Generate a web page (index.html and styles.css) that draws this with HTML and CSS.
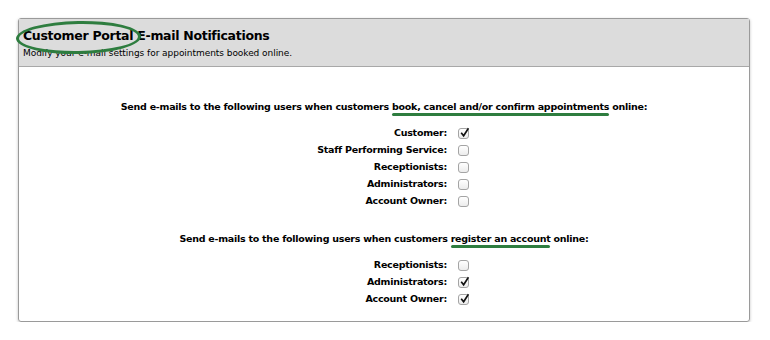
FILE: index.html
```html
<!DOCTYPE html>
<html lang="en">
<head>
  <meta charset="UTF-8">
  <title>Customer Portal E-mail Notifications</title>
  <link rel="stylesheet" href="styles.css">
</head>
<body>

  <div class="panel">
    <div class="panel-header">
      <h2>Customer Portal E-mail Notifications</h2>
      <p>Modify your e-mail settings for appointments booked online.</p>
      <span class="circle"></span>
    </div>

    <div class="panel-body">
      <p class="intro">Send e-mails to the following users when customers <span class="mark">book, cancel and/or confirm appointments</span> online:</p>
      <div class="rows">
        <label>Customer:</label><span class="box checked"><svg viewBox="0 0 10 10"><path d="M2 5.2 L4.2 8 L8.6 1.2"/></svg></span>
        <label>Staff Performing Service:</label><span class="box"></span>
        <label>Receptionists:</label><span class="box"></span>
        <label>Administrators:</label><span class="box"></span>
        <label>Account Owner:</label><span class="box"></span>
      </div>

      <p class="intro second">Send e-mails to the following users when customers <span class="mark">register an account</span> online:</p>
      <div class="rows">
        <label>Receptionists:</label><span class="box"></span>
        <label>Administrators:</label><span class="box checked"><svg viewBox="0 0 10 10"><path d="M2 5.2 L4.2 8 L8.6 1.2"/></svg></span>
        <label>Account Owner:</label><span class="box checked"><svg viewBox="0 0 10 10"><path d="M2 5.2 L4.2 8 L8.6 1.2"/></svg></span>
      </div>
    </div>
  </div>

</body>
</html>
```

FILE: styles.css
```css
body {
  margin: 0;
  padding: 18px 0 0 18px;
  background: #fff;
  font-family: "DejaVu Sans", Verdana, sans-serif;
  color: #000;
}

.panel {
  width: 730px;
  border: 1px solid #9a9a9a;
  border-radius: 3px;
  box-shadow: 0 1px 3px rgba(0, 0, 0, 0.25);
}

.panel-header {
  position: relative;
  background-color: #dcdcdc;
  border-bottom: 1px solid #a8a8a8;
  padding: 8px 4px 0;
  height: 39px;
}

.panel-header h2 {
  margin: 0;
  font-size: 12.5px;
  letter-spacing: -0.3px;
  line-height: 17px;
}

.panel-header p {
  margin: 3px 0 0;
  font-size: 9px;
  letter-spacing: -0.05px;
  line-height: 12px;
}

/* green annotation ellipse */
.circle {
  position: absolute;
  left: -3px;
  top: 2px;
  width: 119px;
  height: 27px;
  border: 3px solid #2e7d3f;
  border-radius: 50%;
  transform: rotate(-1deg);
}

.panel-body {
  padding: 33px 0 16px;
}

.intro {
  margin: 0 0 13px;
  text-align: center;
  font-size: 9.5px;
  letter-spacing: -0.25px;
  font-weight: bold;
  line-height: 14px;
}

.intro.second {
  margin-top: 25px;
}

.mark {
  position: relative;
}

.mark:after {
  content: "";
  position: absolute;
  left: 0;
  right: 0;
  bottom: -4px;
  height: 3px;
  border-radius: 2px;
  background: #2e7d3f;
}

.rows {
  display: grid;
  grid-template-columns: 428px 12px;
  column-gap: 11px;
  row-gap: 5px;
  align-items: center;
  font-size: 9.5px;
  letter-spacing: -0.25px;
  font-weight: bold;
}

.rows label {
  text-align: right;
  line-height: 12px;
}

.box {
  display: block;
  width: 9px;
  height: 9px;
  border: 1px solid #a4a4a4;
  border-radius: 3px;
  background: linear-gradient(#fff, #ececec);
  position: relative;
}

.box svg {
  position: absolute;
  left: 0;
  top: -2px;
  width: 11px;
  height: 11px;
  overflow: visible;
}

.box svg path {
  fill: none;
  stroke: #111;
  stroke-width: 1.5;
}
```
